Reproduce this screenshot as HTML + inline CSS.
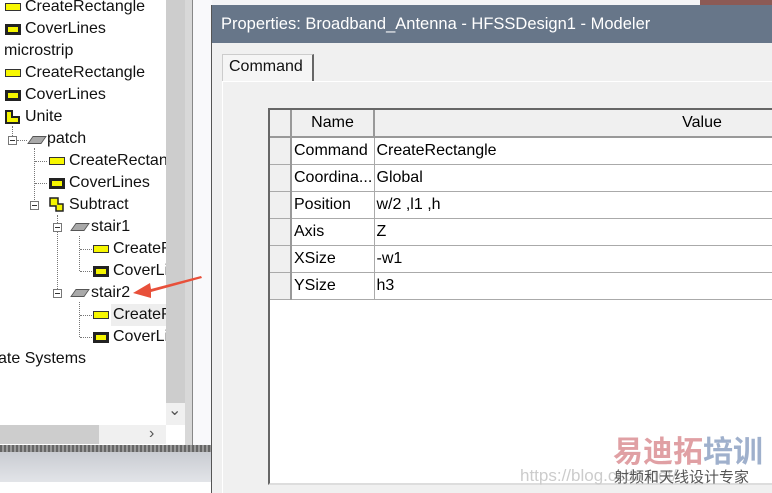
<html><head><style>
body{margin:0;width:772px;height:493px;overflow:hidden;position:relative;background:#fff;font-family:"Liberation Sans",sans-serif;}
.a{position:absolute}
.t{position:absolute;font-size:16px;color:#111;white-space:nowrap;line-height:18px}
.r{position:absolute;width:16px;height:8px;background:#f7f700;border:1px solid #333;box-sizing:border-box}
.c{position:absolute;width:16px;height:11px;background:#222;box-sizing:border-box;border:2px solid #222}
.c:after{content:"";position:absolute;left:1px;top:1px;right:1px;bottom:1px;background:#f5f500}
.m{position:absolute;width:9px;height:9px;border:1px solid #777;box-sizing:border-box;background:#fff}
.m:after{content:"";position:absolute;left:1px;top:3px;width:5px;height:1px;background:#333}
.b{position:absolute;width:14px;height:8px;background:#a9a9a9;border:1px solid #555;transform:skewX(-35deg);box-sizing:border-box}
.dh{position:absolute;border-top:1px dotted #777;height:0}
.dv{position:absolute;border-left:1px dotted #777;width:0}
td{border-right:1px solid #aaa;border-bottom:1px solid #aaa;font-size:16px;padding:0 2px;height:27px;box-sizing:border-box;white-space:nowrap;overflow:hidden}
</style></head><body>
<div class="a" style="left:0;top:0;width:166px;height:425px;background:#fff;overflow:hidden">
<div class="r" style="left:5px;top:3px"></div><div class="t" style="left:25px;top:-2px">CreateRectangle</div>
<div class="c" style="left:5px;top:24px"></div><div class="t" style="left:25px;top:20px">CoverLines</div>
<div class="t" style="left:4px;top:42px">microstrip</div>
<div class="r" style="left:5px;top:69px"></div><div class="t" style="left:25px;top:64px">CreateRectangle</div>
<div class="c" style="left:5px;top:90px"></div><div class="t" style="left:25px;top:86px">CoverLines</div>
<svg class="a" style="left:5px;top:110px" width="16" height="14"><path d="M1 1H7V7H14V13H1Z" fill="#f5f500" stroke="#222" stroke-width="2"/></svg><div class="t" style="left:25px;top:108px">Unite</div>
<div class="dv" style="left:12px;top:126px;height:10px"></div>
<div class="m" style="left:8px;top:136px"></div><div class="dh" style="left:17px;top:140px;width:10px"></div><div class="b" style="left:30px;top:136px"></div><div class="t" style="left:47px;top:130px">patch</div>
<div class="dv" style="left:34px;top:148px;height:58px"></div>
<div class="dh" style="left:35px;top:161px;width:12px"></div><div class="r" style="left:49px;top:157px"></div><div class="t" style="left:69px;top:152px">CreateRectangle</div>
<div class="dh" style="left:35px;top:183px;width:12px"></div><div class="c" style="left:49px;top:178px"></div><div class="t" style="left:69px;top:174px">CoverLines</div>
<div class="m" style="left:30px;top:201px"></div><svg class="a" style="left:49px;top:197px" width="16" height="16"><path d="M1 1H9V7H14V14H7V9H1Z" fill="#f5f500" stroke="#222" stroke-width="1.5"/></svg><div class="t" style="left:69px;top:196px">Subtract</div>
<div class="dv" style="left:57px;top:215px;height:78px"></div>
<div class="m" style="left:53px;top:223px"></div><div class="b" style="left:73px;top:223px"></div><div class="t" style="left:91px;top:218px">stair1</div>
<div class="dv" style="left:79px;top:236px;height:35px"></div>
<div class="dh" style="left:80px;top:249px;width:12px"></div><div class="r" style="left:93px;top:245px"></div><div class="t" style="left:113px;top:240px">CreateRectangle</div>
<div class="dh" style="left:80px;top:271px;width:12px"></div><div class="c" style="left:93px;top:266px"></div><div class="t" style="left:113px;top:262px">CoverLines</div>
<div class="m" style="left:53px;top:289px"></div><div class="b" style="left:73px;top:289px"></div><div class="t" style="left:91px;top:284px">stair2</div>
<div class="dv" style="left:79px;top:302px;height:35px"></div>
<div class="a" style="left:111px;top:304px;width:55px;height:22px;background:#eee"></div>
<div class="dh" style="left:80px;top:315px;width:12px"></div><div class="r" style="left:93px;top:311px"></div><div class="t" style="left:113px;top:306px">CreateRectangle</div>
<div class="dh" style="left:80px;top:337px;width:12px"></div><div class="c" style="left:93px;top:332px"></div><div class="t" style="left:113px;top:328px">CoverLines</div>
<div class="t" style="left:-2px;top:350px">ate Systems</div>
</div>
<div class="a" style="left:166px;top:0;width:19px;height:425px;background:#f0f0f0"></div>
<div class="a" style="left:166px;top:0;width:19px;height:403px;background:#cdcdcd"></div>
<div class="t" style="left:168px;top:402px;color:#555">⌄</div>
<div class="a" style="left:0;top:425px;width:166px;height:19px;background:#f0f0f0"></div>
<div class="a" style="left:0;top:425px;width:99px;height:19px;background:#cdcdcd"></div>
<div class="t" style="left:149px;top:425px;color:#555">›</div>
<div class="a" style="left:185px;top:0;width:7px;height:445px;background:#d8d8d8"></div>
<div class="a" style="left:192px;top:0;width:20px;height:445px;background:#f9f9fb;border-left:1px solid #888"></div>
<svg class="a" style="left:125px;top:270px" width="80" height="30"><polygon points="76,6 26,19 25,13 8,23 26,28 26,22 77,8" fill="#e8503a"/></svg>
<div class="a" style="left:0;top:445px;width:212px;height:7px;background:repeating-linear-gradient(90deg,#666 0 2px,#999 2px 4px)"></div>
<div class="a" style="left:0;top:452px;width:212px;height:30px;background:linear-gradient(#c9ccd2,#e2e4e8)"></div>
<div class="a" style="left:212px;top:0;width:560px;height:5px;background:#f4f4f6"></div>
<div class="a" style="left:700px;top:0;width:72px;height:5px;background:#8c5a55"></div>
<div class="a" style="left:211px;top:5px;width:561px;height:488px;background:#f0f0f0;border-left:1px solid #555"></div>
<div class="a" style="left:212px;top:5px;width:560px;height:38px;background:#677689"></div>
<div class="t" style="left:221px;top:15px;color:#fff;font-size:16.5px">Properties: Broadband_Antenna - HFSSDesign1 - Modeler</div>
<div class="a" style="left:222px;top:54px;width:89px;height:27px;background:#f5f5f5;border:1px solid #ccc;border-right:2px solid #666;border-bottom:none"></div>
<div class="t" style="left:229px;top:58px">Command</div>
<div class="a" style="left:222px;top:81px;width:550px;height:1px;background:#fff"></div>
<div class="a" style="left:222px;top:81px;width:1px;height:412px;background:#fff"></div>
<div class="a" style="left:268px;top:108px;width:504px;height:373px;background:#fff;border-left:2px solid #666;border-top:2px solid #666;border-bottom:2px solid #ddd;overflow:hidden">
<table cellspacing="0" cellpadding="0" style="border-collapse:collapse;width:760px;table-layout:fixed">
<col style="width:21px"><col style="width:83px"><col>
<tr><td style="background:#f0f0f0;border-right:2px solid #999;border-bottom:2px solid #999"></td><td style="background:#f0f0f0;text-align:center;border-right:2px solid #999;border-bottom:2px solid #999">Name</td><td style="background:#f0f0f0;text-align:center;border-bottom:2px solid #999">Value</td></tr>
<tr><td style="background:#f0f0f0;border-right:2px solid #999"></td><td>Command</td><td>CreateRectangle</td></tr>
<tr><td style="background:#f0f0f0;border-right:2px solid #999"></td><td>Coordina...</td><td>Global</td></tr>
<tr><td style="background:#f0f0f0;border-right:2px solid #999"></td><td>Position</td><td>w/2 ,l1 ,h</td></tr>
<tr><td style="background:#f0f0f0;border-right:2px solid #999"></td><td>Axis</td><td>Z</td></tr>
<tr><td style="background:#f0f0f0;border-right:2px solid #999"></td><td>XSize</td><td>-w1</td></tr>
<tr><td style="background:#f0f0f0;border-right:2px solid #999"></td><td>YSize</td><td>h3</td></tr>
</table></div>
<div class="t" style="left:613px;top:436px;font-size:30px;line-height:34px;font-weight:bold;color:#e0a0a4;font-family:'Liberation Sans','Noto Sans CJK SC',sans-serif">易迪拓<span style="color:#9fb0cc">培训</span></div>
<div class="t" style="left:520px;top:467px;font-size:17px;color:#ccc">https://blog.csdn.net/</div>
<div class="t" style="left:614px;top:469px;font-size:15px;color:#555;font-family:'Liberation Sans','Noto Sans CJK SC',sans-serif">射频和天线设计专家</div>
</body></html>
